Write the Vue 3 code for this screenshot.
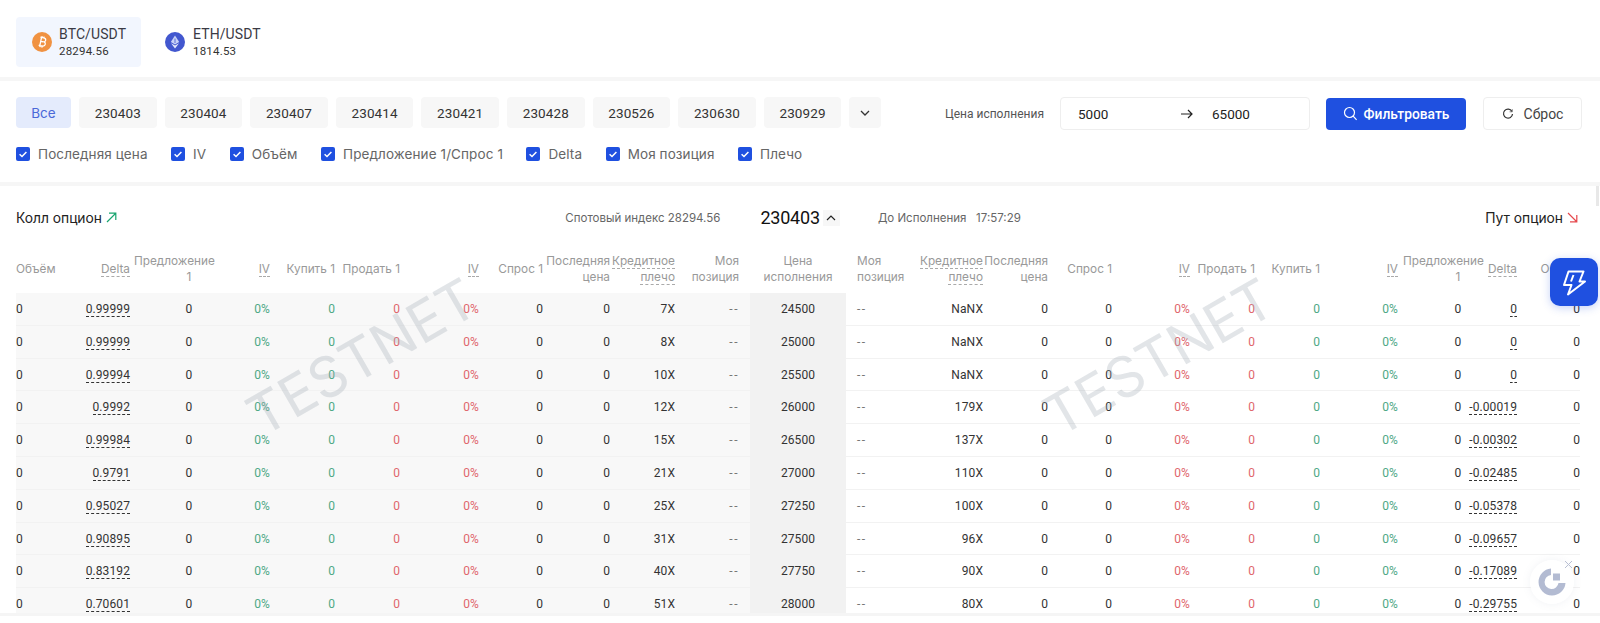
<template>
  <div class="page">
    <!-- пары -->
    <div class="pairs">
      <div class="pair active">
        <svg class="coin" viewBox="0 0 20 20">
          <circle cx="10" cy="10" r="10" fill="#f09242" />
          <g transform="rotate(12 10 10)">
            <path d="M7.4 5.6h3.4c1.5 0 2.4.8 2.4 2 0 .9-.5 1.5-1.2 1.8 1 .2 1.7 1 1.7 2.1 0 1.5-1.1 2.4-2.8 2.4H7.4M8.6 5.6v8.3M8.6 9.6h2.6M9 4.2v1.4M11 4.2v1.4M9 13.9v1.6M11 13.9v1.6" fill="none" stroke="#fff" stroke-width="1.3" />
          </g>
        </svg>
        <div>
          <div class="pair-name">BTC/USDT</div>
          <div class="pair-price">28294.56</div>
        </div>
      </div>
      <div class="pair">
        <svg class="coin" viewBox="0 0 20 20">
          <circle cx="10" cy="10" r="10" fill="#4257cf" />
          <path d="M10 3.4 14.2 10 10 12.5 5.8 10z" fill="#c9d2f7" />
          <path d="M10 13.6 14 11.2 10 16.6 6 11.2z" fill="#e6eafc" />
          <path d="M10 6.6v4.4" stroke="#4257cf" stroke-width=".8" />
        </svg>
        <div>
          <div class="pair-name">ETH/USDT</div>
          <div class="pair-price">1814.53</div>
        </div>
      </div>
    </div>

    <!-- фильтры -->
    <div class="filters">
      <div class="filter-top">
        <div class="dates">
          <button class="date all">Все</button>
          <button v-for="d in dates" :key="d" class="date">{{ d }}</button>
          <button class="date more">
            <svg width="12" height="12" viewBox="0 0 12 12"><path d="M2 4l4 4 4-4" fill="none" stroke="#333" stroke-width="1.3" /></svg>
          </button>
        </div>
        <div class="price-filter">
          <span class="price-label">Цена исполнения</span>
          <div class="range">
            <span class="range-from">5000</span>
            <svg width="12" height="10" viewBox="0 0 12 10"><path d="M0 5h11M7 1l4 4-4 4" fill="none" stroke="#222" stroke-width="1.2" /></svg>
            <span class="range-to">65000</span>
          </div>
          <button class="btn-primary">
            <svg width="15" height="15" viewBox="0 0 15 15"><circle cx="6.5" cy="6.5" r="5" fill="none" stroke="#fff" stroke-width="1.2" /><path d="M10.2 10.2l3.4 3.6" stroke="#fff" stroke-width="1.2" /></svg>
            Фильтровать
          </button>
          <button class="btn-reset">
            <svg width="12" height="12" viewBox="0 0 12 12"><path d="M9.9 3.4A4.5 4.5 0 1 0 10.5 6" fill="none" stroke="#333" stroke-width="1.2" /><path d="M7.6 3.8h2.7V1.2" fill="none" stroke="#333" stroke-width=".6" /></svg>
            Сброс
          </button>
        </div>
      </div>
      <div class="checks">
        <label v-for="c in checks" :key="c" class="check">
          <span class="box">
            <svg width="10" height="10" viewBox="0 0 10 10"><path d="M1.6 5.2l2.4 2.3 4.4-4.6" fill="none" stroke="#fff" stroke-width="1.5" /></svg>
          </span>
          {{ c }}
        </label>
      </div>
    </div>

    <!-- заголовок таблицы -->
    <div class="board">
      <div class="board-head">
        <div class="side-title">
          Колл опцион
          <svg width="11" height="11" viewBox="0 0 11 11"><path d="M1 10l8.5-8.5M3 1.2h6.8V8" fill="none" stroke="#18a56f" stroke-width="1.2" /></svg>
        </div>
        <div class="board-center">
          <span class="spot">Спотовый индекс 28294.56</span>
          <span class="expiry">230403</span>
          <span class="expiry-toggle">
            <svg width="12" height="12" viewBox="0 0 12 12"><path d="M2 8l4-4 4 4" fill="none" stroke="#222" stroke-width="1.2" /></svg>
          </span>
          <span class="countdown">До Исполнения&nbsp;&nbsp;&nbsp;17:57:29</span>
        </div>
        <div class="side-title">
          Пут опцион
          <svg width="11" height="11" viewBox="0 0 11 11"><path d="M1 1l8.5 8.5M9.8 3v6.8H3" fill="none" stroke="#e5484d" stroke-width="1.2" /></svg>
        </div>
      </div>

      <div class="table">
        <div class="tr thead" :style="{ gridTemplateColumns: gridCols }">
          <div v-for="(col, i) in columns" :key="i" class="cell" :class="col.align" :style="{ paddingRight: col.pr + 'px', paddingLeft: col.pl + 'px' }">
            <template v-if="col.word">
              <span class="th-word">Предложение</span>
              <span class="th-line">1</span>
            </template>
            <template v-else>
              <span v-for="line in col.title" :key="line" class="th-line"><span :class="{ dashed: col.dashed }">{{ line }}</span></span>
            </template>
          </div>
        </div>
        <div v-for="r in rows" :key="r.strike" class="tr" :style="{ gridTemplateColumns: gridCols }">
          <div v-for="(col, i) in columns" :key="i" class="cell" :class="[col.align, col.tone, col.bg]" :style="{ paddingRight: col.pr + 'px', paddingLeft: col.pl + 'px' }">
            <span :class="{ 'dashed-val': col.key === 'dl' || col.key === 'dr' }">{{ cellValue(col, r) }}</span>
          </div>
        </div>
        <div class="watermark wm-left">TESTNET</div>
        <div class="watermark wm-right">TESTNET</div>
      </div>
    </div>
    <div class="band"></div>

    <div class="fab">
      <svg width="28" height="30" viewBox="0 0 28 30">
        <path d="M8.5 4.5H23.5L19.5 14.5H25L8 27.5L11.5 18H4Z" fill="none" stroke="#fff" stroke-width="2" stroke-linejoin="round" />
        <path d="M13.5 8L11 14.5" stroke="#fff" stroke-width="2" />
      </svg>
    </div>
    <div class="scroll-thumb"></div>
    <div class="helper">
      <svg width="30" height="30" viewBox="0 0 30 30">
        <path d="M14 1.5A13.5 13.5 0 1 0 28.5 16H21.5A7 7 0 1 1 14 8Z" fill="#b3bbd2" />
        <rect x="16" y="6.5" width="7" height="7" fill="#b3bbd2" />
      </svg>
      <svg class="helper-close" width="9" height="9" viewBox="0 0 9 9"><path d="M1 1l7 7M8 1l-7 7" stroke="#b8bfd2" stroke-width="1" /></svg>
    </div>
  </div>
</template>

<script setup>
const dates = ['230403', '230404', '230407', '230414', '230421', '230428', '230526', '230630', '230929']
const checks = ['Последняя цена', 'IV', 'Объём', 'Предложение 1/Спрос 1', 'Delta', 'Моя позиция', 'Плечо']

const columns = [
  { key: 'zero', title: ['Объём'], w: 50, align: 'left', pr: 0, pl: 0, bg: 'call' },
  { key: 'dl', title: ['Delta'], w: 113, align: 'right', pr: 49, pl: 0, dashed: true, bg: 'call' },
  { key: 'zero', word: true, w: 20, align: 'center', pr: 0, pl: 0, bg: 'call' },
  { key: 'pct', title: ['IV'], w: 71, align: 'right', pr: 0, pl: 0, dashed: true, tone: 'green', bg: 'call' },
  { key: 'zero', title: ['Купить 1'], w: 65, align: 'right', pr: 0, pl: 0, tone: 'green', bg: 'call' },
  { key: 'zero', title: ['Продать 1'], w: 65, align: 'right', pr: 0, pl: 0, tone: 'red', bg: 'call' },
  { key: 'pct', title: ['IV'], w: 79, align: 'right', pr: 0, pl: 0, dashed: true, tone: 'red', bg: 'call' },
  { key: 'zero', title: ['Спрос 1'], w: 64, align: 'right', pr: 0, pl: 0, bg: 'call' },
  { key: 'zero', title: ['Последняя', 'цена'], w: 67, align: 'right', pr: 0, pl: 0, bg: 'call' },
  { key: 'lc', title: ['Кредитное', 'плечо'], w: 65, align: 'right', pr: 0, pl: 0, dashed: true, bg: 'call' },
  { key: 'pos', title: ['Моя', 'позиция'], w: 75, align: 'right', pr: 11, pl: 0, tone: 'muted', bg: 'call' },
  { key: 'strike', title: ['Цена', 'исполнения'], w: 96, align: 'center', pr: 0, pl: 0, bg: 'mid' },
  { key: 'pos', title: ['Моя', 'позиция'], w: 59, align: 'left', pr: 0, pl: 11, tone: 'muted' },
  { key: 'lp', title: ['Кредитное', 'плечо'], w: 78, align: 'right', pr: 0, pl: 0, dashed: true },
  { key: 'zero', title: ['Последняя', 'цена'], w: 65, align: 'right', pr: 0, pl: 0 },
  { key: 'zero', title: ['Спрос 1'], w: 64, align: 'right', pr: 0, pl: 0 },
  { key: 'pct', title: ['IV'], w: 78, align: 'right', pr: 0, pl: 0, dashed: true, tone: 'red' },
  { key: 'zero', title: ['Продать 1'], w: 65, align: 'right', pr: 0, pl: 0, tone: 'red' },
  { key: 'zero', title: ['Купить 1'], w: 65, align: 'right', pr: 0, pl: 0, tone: 'green' },
  { key: 'pct', title: ['IV'], w: 128, align: 'right', pr: 50, pl: 0, dashed: true, tone: 'green' },
  { key: 'zero', word: true, w: 20, align: 'center', pr: 0, pl: 0 },
  { key: 'dr', title: ['Delta'], w: 49, align: 'right', pr: 0, pl: 0, dashed: true },
  { key: 'zero', title: ['Объём'], w: 63, align: 'right', pr: 0, pl: 0 }
]

const gridCols = columns.map((c) => c.w + 'px').join(' ')

const rows = [
  { strike: '24500', dl: '0.99999', lc: '7X', lp: 'NaNX', dr: '0' },
  { strike: '25000', dl: '0.99999', lc: '8X', lp: 'NaNX', dr: '0' },
  { strike: '25500', dl: '0.99994', lc: '10X', lp: 'NaNX', dr: '0' },
  { strike: '26000', dl: '0.9992', lc: '12X', lp: '179X', dr: '-0.00019' },
  { strike: '26500', dl: '0.99984', lc: '15X', lp: '137X', dr: '-0.00302' },
  { strike: '27000', dl: '0.9791', lc: '21X', lp: '110X', dr: '-0.02485' },
  { strike: '27250', dl: '0.95027', lc: '25X', lp: '100X', dr: '-0.05378' },
  { strike: '27500', dl: '0.90895', lc: '31X', lp: '96X', dr: '-0.09657' },
  { strike: '27750', dl: '0.83192', lc: '40X', lp: '90X', dr: '-0.17089' },
  { strike: '28000', dl: '0.70601', lc: '51X', lp: '80X', dr: '-0.29755' }
]

const cellValue = (col, row) => {
  if (col.key === 'zero') return '0'
  if (col.key === 'pct') return '0%'
  if (col.key === 'pos') return '--'
  return row[col.key]
}
</script>

<style scoped>
.page {
  position: relative;
  width: 1600px;
  height: 623px;
  overflow: hidden;
  display: flex;
  flex-direction: column;
  background: #fff;
  color: #333;
  font-family: Inter, "Noto Sans", sans-serif;
}

.pairs {
  height: 77px;
  flex: none;
  box-sizing: border-box;
  padding: 17px 16px 0;
  display: flex;
}
.pair {
  width: 125px;
  height: 50px;
  box-sizing: border-box;
  padding-left: 16px;
  display: flex;
  align-items: center;
  gap: 7px;
  border-radius: 4px;
}
.pair.active {
  background: #f2f6fe;
}
.pair:not(.active) {
  padding-left: 24px;
  gap: 8px;
}
.coin {
  width: 20px;
  height: 20px;
}
.pair-name {
  font-family: Roboto, sans-serif;
  font-size: 14px;
  line-height: 18px;
  letter-spacing: 0.1px;
  color: #3a3a44;
}
.pair-price {
  font-family: Roboto, sans-serif;
  font-size: 11.5px;
  line-height: 17px;
  letter-spacing: 0.2px;
  color: #333;
}

.filters {
  flex: none;
  height: 109px;
  box-sizing: border-box;
  border-top: 4px solid #f6f6f6;
  border-bottom: 4px solid #f6f6f6;
  padding: 16px 18px 0 16px;
}
.filter-top {
  display: flex;
  justify-content: space-between;
  align-items: flex-start;
}
.dates {
  display: flex;
  gap: 8px;
}
.date {
  width: 77.6px;
  height: 31px;
  border: none;
  padding: 0;
  border-radius: 4px;
  background: #f7f7f7;
  color: #333;
  font-family: Roboto, sans-serif;
  font-size: 13.5px;
  letter-spacing: 0.1px;
}
.date.all {
  width: 55px;
  background: #e4ebfc;
  color: #4a68d8;
  font-family: Inter, sans-serif;
  font-size: 13.5px;
  letter-spacing: 0;
}
.date.more {
  width: 32px;
  display: flex;
  align-items: center;
  justify-content: center;
}
.price-filter {
  display: flex;
  align-items: center;
  height: 33px;
}
.price-label {
  font-family: Roboto, sans-serif;
  font-size: 12px;
  color: #555;
  margin-right: 16px;
}
.range {
  width: 250px;
  height: 33px;
  box-sizing: border-box;
  border: 1px solid #eee;
  border-radius: 4px;
  display: flex;
  align-items: center;
  padding-left: 17px;
  font-family: Roboto, sans-serif;
  font-size: 13.5px;
  color: #222;
  margin-right: 16px;
}
.range-from {
  width: 103px;
}
.range-to {
  margin-left: 19px;
}
.btn-primary {
  width: 140px;
  height: 32px;
  border: none;
  border-radius: 4px;
  background: #1f50e0;
  color: #fff;
  font-family: Roboto, sans-serif;
  font-size: 13.8px;
  font-weight: 500;
  display: flex;
  align-items: center;
  justify-content: center;
  gap: 6px;
  margin-right: 17px;
}
.btn-reset {
  width: 99px;
  height: 33px;
  box-sizing: border-box;
  border: 1px solid #eee;
  border-radius: 4px;
  background: #fff;
  color: #444;
  font-family: Roboto, sans-serif;
  font-size: 14px;
  display: flex;
  align-items: center;
  justify-content: center;
  gap: 10px;
}
.checks {
  display: flex;
  gap: 23.5px;
  margin-top: 16px;
}
.check {
  display: flex;
  align-items: center;
  gap: 8px;
  font-size: 13.5px;
  letter-spacing: 0.1px;
  line-height: 16px;
  color: #666;
}
.box {
  width: 14px;
  height: 14px;
  border-radius: 2px;
  background: #1f50e0;
  display: flex;
  align-items: center;
  justify-content: center;
}

.board {
  flex: 1;
  min-height: 0;
  overflow: hidden;
}
.board-head {
  height: 63px;
  box-sizing: border-box;
  padding: 0 22px 0 16px;
  display: flex;
  align-items: center;
  justify-content: space-between;
}
.side-title {
  display: flex;
  align-items: center;
  gap: 4px;
  font-size: 13.8px;
  color: #222;
}
.board-center {
  display: flex;
  align-items: center;
  margin-right: 16px;
  font-size: 11.5px;
  color: #666;
}
.expiry {
  margin-left: 40px;
  font-family: Roboto, sans-serif;
  font-size: 18px;
  letter-spacing: -0.2px;
  color: #111;
}
.expiry-toggle {
  width: 17px;
  height: 16px;
  margin-left: 3px;
  background: #f7f7f7;
  display: flex;
  align-items: center;
  justify-content: center;
}
.countdown {
  margin-left: 38px;
}

.table {
  position: relative;
  margin-left: 16px;
  width: 1564px;
}
.tr {
  display: grid;
  height: 32.8px;
}
.thead {
  height: 44px;
  box-sizing: border-box;
  padding-bottom: 4px;
  align-items: center;
  font-size: 11.8px;
  line-height: 16px;
  color: #999;
}
.cell {
  box-sizing: border-box;
  min-width: 0;
  white-space: nowrap;
}
.tr:not(.thead) .cell {
  height: 32.8px;
  line-height: 32px;
  border-bottom: 1px solid #f2f2f2;
  font-family: Roboto, sans-serif;
  font-size: 12px;
  letter-spacing: 0.1px;
  color: #333;
}
.left { text-align: left; }
.right { text-align: right; }
.center { text-align: center; }
.tr:not(.thead) .green { color: #4ea885; }
.tr:not(.thead) .red { color: #e0666c; }
.tr:not(.thead) .muted { color: #777; letter-spacing: 1.5px; }
.call { background: #f8f8f8; }
.mid { background: #f2f2f2; }
.th-line {
  display: block;
}
.th-word {
  display: block;
  margin: 0 -14px 0 -45px;
  text-align: right;
}
.dashed {
  border-bottom: 1px dashed #aaa;
}
.dashed-val {
  border-bottom: 1px dashed #333;
}
.watermark {
  position: absolute;
  top: 73px;
  width: 260px;
  line-height: 70px;
  text-align: center;
  font-size: 56px;
  font-weight: 400;
  color: rgba(160, 168, 178, 0.3);
  transform: rotate(-30deg);
  pointer-events: none;
}
.wm-left { left: 216px; }
.wm-right { left: 1013px; }

.band {
  flex: none;
  height: 3px;
  margin-bottom: 7px;
  background: #f5f5f5;
}

.fab {
  position: absolute;
  left: 1550px;
  top: 258px;
  width: 48px;
  height: 48px;
  border-radius: 10px;
  background: #1f50e0;
  box-shadow: 0 2px 8px rgba(31, 80, 224, 0.25);
  display: flex;
  align-items: center;
  justify-content: center;
}
.scroll-thumb {
  position: absolute;
  right: 1px;
  top: 186px;
  width: 3px;
  height: 20px;
  background: #e8e8e8;
}
.helper {
  position: absolute;
  left: 1530px;
  top: 560px;
  width: 44px;
  height: 44px;
  border-radius: 50%;
  background: rgba(255, 255, 255, 0.92);
  box-shadow: 0 0 8px rgba(120, 130, 160, 0.1);
  display: flex;
  align-items: center;
  justify-content: center;
}
.helper-close {
  position: absolute;
  right: 1px;
  top: 0;
}
</style>

<style>
html, body {
  margin: 0;
  overflow: hidden;
  background: #fff;
}
</style>
